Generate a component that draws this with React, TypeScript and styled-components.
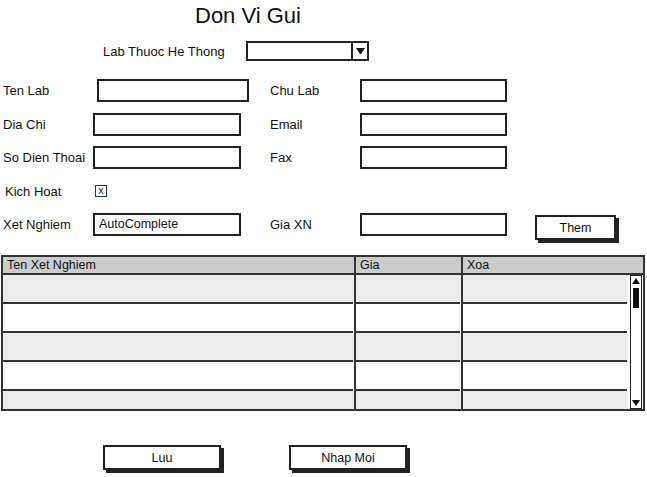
import React, { FC } from 'react'
import styled, { createGlobalStyle } from 'styled-components'

const GlobalStyle = createGlobalStyle`
  body {
    margin: 0;
    background: #fff;
    font-family: "Liberation Sans", Arial, sans-serif;
    color: #111;
  }
`

const Page = styled.div`
  width: 647px;
  height: 477px;
  overflow: hidden;
`

const Title = styled.h1`
  margin: 0;
  padding-left: 195px;
  height: 30px;
  line-height: 32px;
  font-size: 22px;
  font-weight: normal;
`

const LabRow = styled.div`
  display: flex;
  align-items: center;
  margin-top: 11px;
  padding-left: 103px;
  height: 20px;
`

const Label = styled.span<{ $indent?: number }>`
  font-size: 13px;
  padding-left: ${p => p.$indent || 0}px;
  white-space: nowrap;
`

const LabLabel = styled(Label)`
  width: 143px;
`

const Select = styled.div`
  width: 123px;
  height: 20px;
  box-sizing: border-box;
  border: 2px solid #222;
  display: flex;
  justify-content: flex-end;
`

const SelectArrow = styled.div`
  width: 14px;
  border-left: 2px solid #222;
  display: flex;
  align-items: center;
  justify-content: center;
`

const Form = styled.div`
  display: grid;
  grid-template-columns: 90px 148px 29px 90px 147px 27px 83px;
  grid-auto-rows: 23px;
  row-gap: 10.5px;
  margin-top: 18px;
  padding-left: 3px;
  align-items: center;
`

const Input = styled.div<{ $shift?: number; $extra?: number }>`
  height: 23px;
  box-sizing: border-box;
  margin-left: ${p => p.$shift || 0}px;
  width: ${p => 148 + (p.$extra || 0)}px;
  border: 2px solid #222;
  background: #fff;
  font-size: 12.5px;
  line-height: 19px;
  padding-left: 4px;
`

const Checkbox = styled.div`
  width: 12px;
  height: 12px;
  box-sizing: border-box;
  margin-left: 2px;
  border: 1px solid #333;
  font-size: 10px;
  line-height: 9px;
  text-align: center;
`

const Button = styled.div<{ $width: number }>`
  width: ${p => p.$width}px;
  height: 25px;
  box-sizing: border-box;
  border: 2px solid #222;
  box-shadow: 3px 3px 0 #222;
  background: #fff;
  font-size: 12.5px;
  display: flex;
  align-items: center;
  justify-content: center;
`

const ThemButton = styled(Button)`
  align-self: start;
  margin-top: 2px;
  margin-left: 1px;
`

const Table = styled.div`
  margin: 19px 0 0 1px;
  width: 644px;
  height: 156px;
  box-sizing: border-box;
  border: 2px solid #333;
  display: flex;
  flex-direction: column;
  overflow: hidden;
`

const Header = styled.div`
  display: grid;
  grid-template-columns: 351px 107px 1fr;
  height: 16px;
  background: #ccc;
  border-bottom: 2px solid #333;
  flex-shrink: 0;
`

const HeadCell = styled.div<{ $divider?: boolean }>`
  font-size: 12.5px;
  line-height: 16px;
  padding-left: 4px;
  border-left: ${p => (p.$divider ? '2px solid #333' : 'none')};
`

const Body = styled.div`
  flex: 1;
  display: flex;
  overflow: hidden;
`

const Rows = styled.div`
  flex: 1;
`

const Row = styled.div<{ $alt: boolean }>`
  display: grid;
  grid-template-columns: 351px 107px 1fr;
  height: 29px;
  background: ${p => (p.$alt ? '#ececec' : '#fff')};
`

const Cell = styled.div<{ $divider?: boolean }>`
  border-left: ${p => (p.$divider ? '2px solid #333' : 'none')};
  border-bottom: 2px solid #333;
  margin-right: 1px;
`

const Scrollbar = styled.div`
  width: 12px;
  margin: 0 1px 0 2px;
  box-sizing: border-box;
  border: 1.5px solid #222;
  background: #fff;
  display: flex;
  flex-direction: column;
  align-items: center;
`

const ScrollArrow = styled.div`
  height: 10px;
  width: 100%;
  display: flex;
  align-items: center;
  justify-content: center;
`

const Thumb = styled.div`
  width: 6px;
  height: 20px;
  margin-top: 2px;
  background: #111;
`

const Spacer = styled.div`
  flex: 1;
`

const Footer = styled.div`
  display: flex;
  gap: 68px;
  margin-top: 34px;
  padding-left: 103px;
`

const Tri: FC<{ up?: boolean; size?: number }> = ({ up, size = 8 }) => (
  <svg width={size} height={size * 0.75} viewBox="0 0 8 6">
    <polygon points={up ? '0,6 8,6 4,0' : '0,0 8,0 4,6'} fill="#111" />
  </svg>
)

const rows = [0, 1, 2, 3, 4]

export default function App() {
  return (
    <Page>
      <GlobalStyle />
      <Title>Don Vi Gui</Title>
      <LabRow>
        <LabLabel>Lab Thuoc He Thong</LabLabel>
        <Select>
          <SelectArrow>
            <Tri size={9} />
          </SelectArrow>
        </Select>
      </LabRow>

      <Form>
        <Label>Ten Lab</Label>
        <Input $shift={4} $extra={4} />
        <span />
        <Label>Chu Lab</Label>
        <Input $extra={-1} />
        <span />
        <span />

        <Label>Dia Chi</Label>
        <Input />
        <span />
        <Label>Email</Label>
        <Input $extra={-1} />
        <span />
        <span />

        <Label>So Dien Thoai</Label>
        <Input />
        <span />
        <Label>Fax</Label>
        <Input $extra={-1} />
        <span />
        <span />

        <Label $indent={2}>Kich Hoat</Label>
        <Checkbox>x</Checkbox>
        <span />
        <span />
        <span />
        <span />
        <span />

        <Label>Xet Nghiem</Label>
        <Input>AutoComplete</Input>
        <span />
        <Label>Gia XN</Label>
        <Input $extra={-1} />
        <span />
        <ThemButton $width={81}>Them</ThemButton>
      </Form>

      <Table>
        <Header>
          <HeadCell>Ten Xet Nghiem</HeadCell>
          <HeadCell $divider>Gia</HeadCell>
          <HeadCell $divider>Xoa</HeadCell>
        </Header>
        <Body>
          <Rows>
            {rows.map(i => (
              <Row key={i} $alt={i % 2 === 0}>
                <Cell />
                <Cell $divider />
                <Cell $divider />
              </Row>
            ))}
          </Rows>
          <Scrollbar>
            <ScrollArrow>
              <Tri up />
            </ScrollArrow>
            <Thumb />
            <Spacer />
            <ScrollArrow>
              <Tri />
            </ScrollArrow>
          </Scrollbar>
        </Body>
      </Table>

      <Footer>
        <Button $width={118}>Luu</Button>
        <Button $width={118}>Nhap Moi</Button>
      </Footer>
    </Page>
  )
}
